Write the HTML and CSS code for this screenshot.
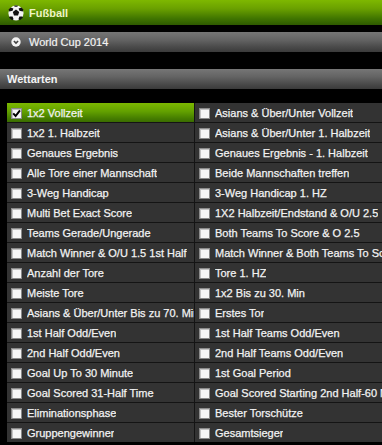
FILE: index.html
```html
<!DOCTYPE html>
<html>
<head>
<meta charset="utf-8">
<link rel="stylesheet" href="styles.css">
</head>
<body>
<div class="bar bar-sport">
  <svg class="ball" width="16" height="16" viewBox="0 0 16 16">
    <circle cx="8" cy="8" r="7.6" fill="#f4f4f4"/>
    <polygon points="8,4.6 11.2,6.9 10,10.6 6,10.6 4.8,6.9" fill="#111"/>
    <path d="M2.6 2.4 L5.4 3.4 L4.6 5.8 L1.2 6.6 L0.6 4.4 Z" fill="#111"/>
    <path d="M13.4 2.4 L10.6 3.4 L11.4 5.8 L14.8 6.6 L15.4 4.4 Z" fill="#111"/>
    <path d="M1.8 11.4 L4.6 11.6 L5.6 14.2 L4.2 15.2 L1 12.8 Z" fill="#111"/>
    <path d="M14.2 11.4 L11.4 11.6 L10.4 14.2 L11.8 15.2 L15 12.8 Z" fill="#111"/>
    <path d="M6.2 0.5 L9.8 0.5 L9.4 1.8 L6.6 1.8 Z" fill="#111"/>
  </svg>
  <span class="sport-title">Fußball</span>
</div>
<div class="bar bar-gray bar-league">
  <svg class="chev" width="10" height="10" viewBox="0 0 10 10">
    <circle cx="5" cy="5" r="4.7" fill="#f2f2f2"/>
    <path d="M2.9 4 L5 6.1 L7.1 4" fill="none" stroke="#444" stroke-width="1.6"/>
  </svg>
  <span class="league-title">World Cup 2014</span>
</div>
<div class="bar bar-gray bar-section">
  <span class="section-title">Wettarten</span>
</div>
<div class="grid">
  <label class="cell selected"><span class="cb checked"><svg width="9" height="9" viewBox="0 0 9 9"><path d="M1.2 4.4 L3.6 7 L8 1.4" fill="none" stroke="#000" stroke-width="2"/></svg></span><span class="txt">1x2 Vollzeit</span></label>
  <label class="cell"><span class="cb"></span><span class="txt">Asians &amp; Über/Unter Vollzeit</span></label>
  <label class="cell"><span class="cb"></span><span class="txt">1x2 1. Halbzeit</span></label>
  <label class="cell"><span class="cb"></span><span class="txt">Asians &amp; Über/Unter 1. Halbzeit</span></label>
  <label class="cell"><span class="cb"></span><span class="txt">Genaues Ergebnis</span></label>
  <label class="cell"><span class="cb"></span><span class="txt">Genaues Ergebnis - 1. Halbzeit</span></label>
  <label class="cell"><span class="cb"></span><span class="txt">Alle Tore einer Mannschaft</span></label>
  <label class="cell"><span class="cb"></span><span class="txt">Beide Mannschaften treffen</span></label>
  <label class="cell"><span class="cb"></span><span class="txt">3-Weg Handicap</span></label>
  <label class="cell"><span class="cb"></span><span class="txt">3-Weg Handicap 1. HZ</span></label>
  <label class="cell"><span class="cb"></span><span class="txt">Multi Bet Exact Score</span></label>
  <label class="cell"><span class="cb"></span><span class="txt">1X2 Halbzeit/Endstand &amp; O/U 2.5</span></label>
  <label class="cell"><span class="cb"></span><span class="txt">Teams Gerade/Ungerade</span></label>
  <label class="cell"><span class="cb"></span><span class="txt">Both Teams To Score &amp; O 2.5</span></label>
  <label class="cell"><span class="cb"></span><span class="txt">Match Winner &amp; O/U 1.5 1st Half</span></label>
  <label class="cell"><span class="cb"></span><span class="txt">Match Winner &amp; Both Teams To Score</span></label>
  <label class="cell"><span class="cb"></span><span class="txt">Anzahl der Tore</span></label>
  <label class="cell"><span class="cb"></span><span class="txt">Tore 1. HZ</span></label>
  <label class="cell"><span class="cb"></span><span class="txt">Meiste Tore</span></label>
  <label class="cell"><span class="cb"></span><span class="txt">1x2 Bis zu 30. Min</span></label>
  <label class="cell"><span class="cb"></span><span class="txt">Asians &amp; Über/Unter Bis zu 70. Min</span></label>
  <label class="cell"><span class="cb"></span><span class="txt">Erstes Tor</span></label>
  <label class="cell"><span class="cb"></span><span class="txt">1st Half Odd/Even</span></label>
  <label class="cell"><span class="cb"></span><span class="txt">1st Half Teams Odd/Even</span></label>
  <label class="cell"><span class="cb"></span><span class="txt">2nd Half Odd/Even</span></label>
  <label class="cell"><span class="cb"></span><span class="txt">2nd Half Teams Odd/Even</span></label>
  <label class="cell"><span class="cb"></span><span class="txt">Goal Up To 30 Minute</span></label>
  <label class="cell"><span class="cb"></span><span class="txt">1st Goal Period</span></label>
  <label class="cell"><span class="cb"></span><span class="txt">Goal Scored 31-Half Time</span></label>
  <label class="cell"><span class="cb"></span><span class="txt">Goal Scored Starting 2nd Half-60 Min</span></label>
  <label class="cell"><span class="cb"></span><span class="txt">Eliminationsphase</span></label>
  <label class="cell"><span class="cb"></span><span class="txt">Bester Torschütze</span></label>
  <label class="cell"><span class="cb"></span><span class="txt">Gruppengewinner</span></label>
  <label class="cell"><span class="cb"></span><span class="txt">Gesamtsieger</span></label>
</div>
</body>
</html>
```
FILE: styles.css
```css
html, body {
  margin: 0;
  padding: 0;
  background: #000;
  overflow: hidden;
  width: 382px;
  height: 445px;
}
body {
  font-family: "Liberation Sans", Arial, sans-serif;
  font-size: 11px;
  color: #f2f2f2;
}
.bar {
  display: flex;
  align-items: center;
  box-sizing: border-box;
}
.bar-sport {
  height: 25px;
  background: linear-gradient(to bottom, #7eb800 0%, #6aa000 35%, #3f7400 75%, #2e5a00 100%);
  padding-left: 8px;
}
.ball {
  display: block;
  margin-right: 5px;
}
.sport-title {
  font-weight: bold;
  color: #eef4c4;
}
.bar-gray {
  height: 20px;
  background: linear-gradient(to bottom, #767676 0%, #636363 40%, #4a4a4a 75%, #3a3a3a 100%);
}
.bar-league {
  margin-top: 7px;
  padding-left: 11px;
}
.chev {
  display: block;
  margin-right: 8px;
}
.league-title {
  color: #f2f2f2;
  -webkit-text-stroke: 0.2px #f2f2f2;
}
.bar-section {
  margin-top: 17px;
  padding-left: 7px;
}
.section-title {
  font-weight: bold;
  color: #f4f4f4;
}
.grid {
  margin-top: 14px;
  margin-left: 7px;
  width: 400px;
  display: grid;
  grid-template-columns: 187px 205px;
  column-gap: 1px;
  row-gap: 1px;
  background: #141414;
}
.cell {
  display: flex;
  align-items: center;
  height: 19px;
  padding-left: 4px;
  background: #333;
  overflow: hidden;
  white-space: nowrap;
}
.cell.selected {
  background: linear-gradient(to bottom, #7cb800 0%, #62a000 45%, #467e00 80%, #3a6c00 100%);
}
.cb {
  flex: none;
  width: 11px;
  height: 11px;
  box-sizing: border-box;
  border: 1px solid #8a8a8a;
  background: #f6f6f6;
  box-shadow: inset 1px 1px 0 #c4c4c4;
  margin-right: 5px;
  margin-top: 1px;
  display: flex;
  align-items: center;
  justify-content: center;
}
.cb svg {
  display: block;
}
.txt {
  overflow: hidden;
  -webkit-text-stroke: 0.25px #f2f2f2;
}
```
